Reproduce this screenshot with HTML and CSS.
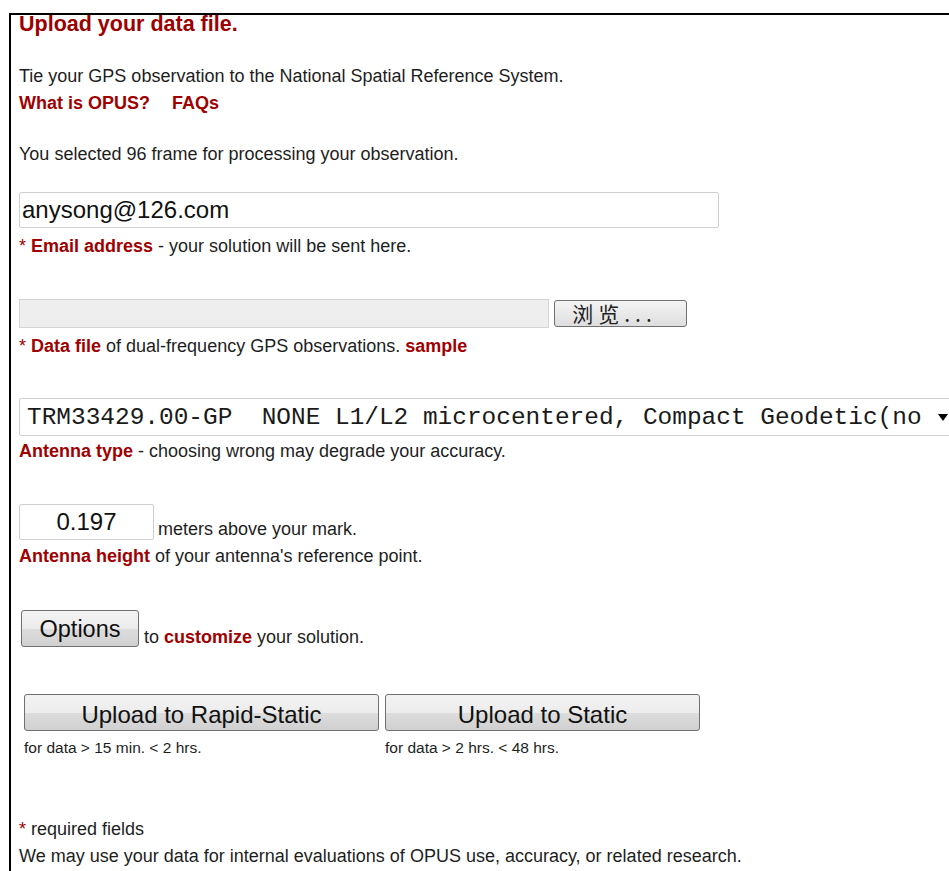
FILE: index.html
```html
<!DOCTYPE html>
<html lang="en">
<head>
<meta charset="utf-8">
<title>OPUS Upload</title>
<link rel="stylesheet" href="styles.css">
</head>
<body>
<form class="panel">
  <h1 class="title">Upload your data file.</h1>

  <p class="intro">Tie your GPS observation to the National Spatial Reference System.<br>
    <a class="red-link" href="#">What is OPUS?</a><a class="red-link faq-link" href="#">FAQs</a></p>

  <p class="frame-note">You selected 96 frame for processing your observation.</p>

  <input class="email-input" type="text" value="anysong@126.com">
  <p class="hint"><span class="req">*</span> <b class="key">Email address</b> - your solution will be sent here.</p>

  <div class="file-row">
    <span class="file-box"></span>
    <button type="button" class="browse-btn">浏览...</button>
  </div>
  <p class="hint"><span class="req">*</span> <b class="key">Data file</b> of dual-frequency GPS observations. <a class="red-link" href="#">sample</a></p>

  <div class="select-wrap">
    <select class="antenna-select">
      <option>TRM33429.00-GP&nbsp; NONE L1/L2 microcentered, Compact Geodetic(no</option>
    </select>
    <span class="select-arrow"></span>
  </div>
  <p class="hint hint-tight"><b class="key">Antenna type</b> - choosing wrong may degrade your accuracy.</p>

  <div class="height-row">
    <input class="height-input" type="text" value="0.197">
    <span class="height-unit">meters above your mark.</span>
  </div>
  <p class="hint hint-height"><b class="key">Antenna height</b> of your antenna's reference point.</p>

  <div class="options-row">
    <button type="button" class="gray-btn options-btn">Options</button>
    <span class="options-text">to <b class="key">customize</b> your solution.</span>
  </div>

  <div class="upload-row">
    <div class="upload-col">
      <button type="button" class="gray-btn upload-btn rapid">Upload to Rapid-Static</button>
      <span class="upload-note">for data &gt; 15 min. &lt; 2 hrs.</span>
    </div>
    <div class="upload-col">
      <button type="button" class="gray-btn upload-btn static">Upload to Static</button>
      <span class="upload-note">for data &gt; 2 hrs. &lt; 48 hrs.</span>
    </div>
  </div>

  <p class="footer-notes"><span class="req">*</span> required fields<br>
    We may use your data for internal evaluations of OPUS use, accuracy, or related research.</p>
</form>
</body>
</html>
```

FILE: styles.css
```css
html, body {
  margin: 0;
  padding: 0;
  overflow: hidden;
  background: #fff;
}

body {
  font-family: "Liberation Sans", Arial, sans-serif;
  font-size: 18px;
  color: #1e1e1e;
}

.panel {
  margin: 13px 0 0 9px;
  border-top: 2px solid #000;
  border-left: 2px solid #000;
  padding: 0 0 40px 8px;
  min-height: 900px;
  overflow: hidden;
  display: flex;
  flex-direction: column;
  align-items: flex-start;
}

p { margin: 0; }

.title {
  margin: 0;
  font-size: 21.5px;
  line-height: 18px;
  font-weight: bold;
  color: #9c0000;
}

.red-link, .key {
  color: #a00000;
  font-weight: bold;
  text-decoration: none;
}

.faq-link { margin-left: 22px; }

.req { color: #a00000; }

.intro {
  margin-top: 30px;
  line-height: 27px;
}

.frame-note {
  margin-top: 27px;
  line-height: 20px;
}

.hint {
  margin-top: 8px;
  line-height: 20px;
}

.email-input {
  margin-top: 28px;
  box-sizing: border-box;
  width: 700px;
  height: 36px;
  border: 1px solid #cfcfcf;
  border-radius: 2px;
  padding: 0 2px;
  font-family: "Liberation Sans", Arial, sans-serif;
  font-size: 24px;
  color: #111;
  outline: none;
}

.file-row {
  margin-top: 43px;
  display: flex;
  align-items: center;
  gap: 5px;
  height: 29px;
}

.file-box {
  box-sizing: border-box;
  width: 530px;
  height: 29px;
  border: 1px solid #d4d4d4;
  background: #eeeeee;
}

.browse-btn {
  box-sizing: border-box;
  width: 133px;
  height: 27px;
  padding: 0 12px 0 0;
  border: 1px solid #707070;
  border-radius: 3px;
  background: linear-gradient(#f4f4f4, #dedede);
  font-family: "Noto Sans CJK SC", sans-serif;
  font-size: 21px;
  line-height: 25px;
  color: #222;
  letter-spacing: 5px;
}

.select-wrap {
  margin-top: 42px;
  position: relative;
  width: 960px;
  height: 38px;
}

.antenna-select {
  appearance: none;
  -webkit-appearance: none;
  box-sizing: border-box;
  width: 100%;
  height: 38px;
  border: 1px solid #cfcfcf;
  border-radius: 2px;
  background: #fff;
  padding: 0 0 0 7px;
  font-family: "Liberation Mono", "Courier New", monospace;
  font-size: 24.45px;
  color: #1a1a1a;
  outline: none;
}

.select-arrow {
  position: absolute;
  left: 919px;
  top: 16px;
  width: 0;
  height: 0;
  border-left: 5px solid transparent;
  border-right: 5px solid transparent;
  border-top: 7px solid #000;
}

.hint-tight { margin-top: 5px; }

.height-row {
  margin-top: 43px;
  display: flex;
  align-items: flex-end;
  gap: 4px;
}

.height-input {
  box-sizing: border-box;
  width: 135px;
  height: 36px;
  border: 1px solid #cfcfcf;
  border-radius: 2px;
  text-align: center;
  padding: 0 0 1px;
  font-family: "Liberation Sans", Arial, sans-serif;
  font-size: 24px;
  color: #111;
  outline: none;
}

.height-unit {
  line-height: 20px;
  padding-bottom: 1px;
}

.hint-height { margin-top: 6px; }

.options-row {
  margin-top: 44px;
  display: flex;
  align-items: flex-end;
  gap: 5px;
}

.gray-btn {
  box-sizing: border-box;
  height: 37px;
  padding: 2px 0 0;
  border: 1px solid #707070;
  border-radius: 3px;
  background: linear-gradient(#f3f3f3 0%, #ececec 50%, #dddddd 51%, #d0d0d0 100%);
  font-family: "Liberation Sans", Arial, sans-serif;
  font-size: 23.5px;
  color: #111;
}

.options-btn {
  margin-left: 2px;
  width: 118px;
}

.options-text {
  line-height: 20px;
  padding-bottom: 0;
}

.upload-row {
  margin-top: 47px;
  margin-left: 5px;
  display: flex;
  gap: 6px;
}

.upload-col {
  display: flex;
  flex-direction: column;
  align-items: flex-start;
}

.upload-btn {
  padding: 4px 0 0;
  font-size: 24px;
}

.upload-btn.rapid { width: 355px; }
.upload-btn.static { width: 315px; }

.upload-note {
  font-size: 15.5px;
  line-height: 16px;
  margin-top: 9px;
}

.footer-notes {
  margin-top: 60px;
  line-height: 27px;
}
```
